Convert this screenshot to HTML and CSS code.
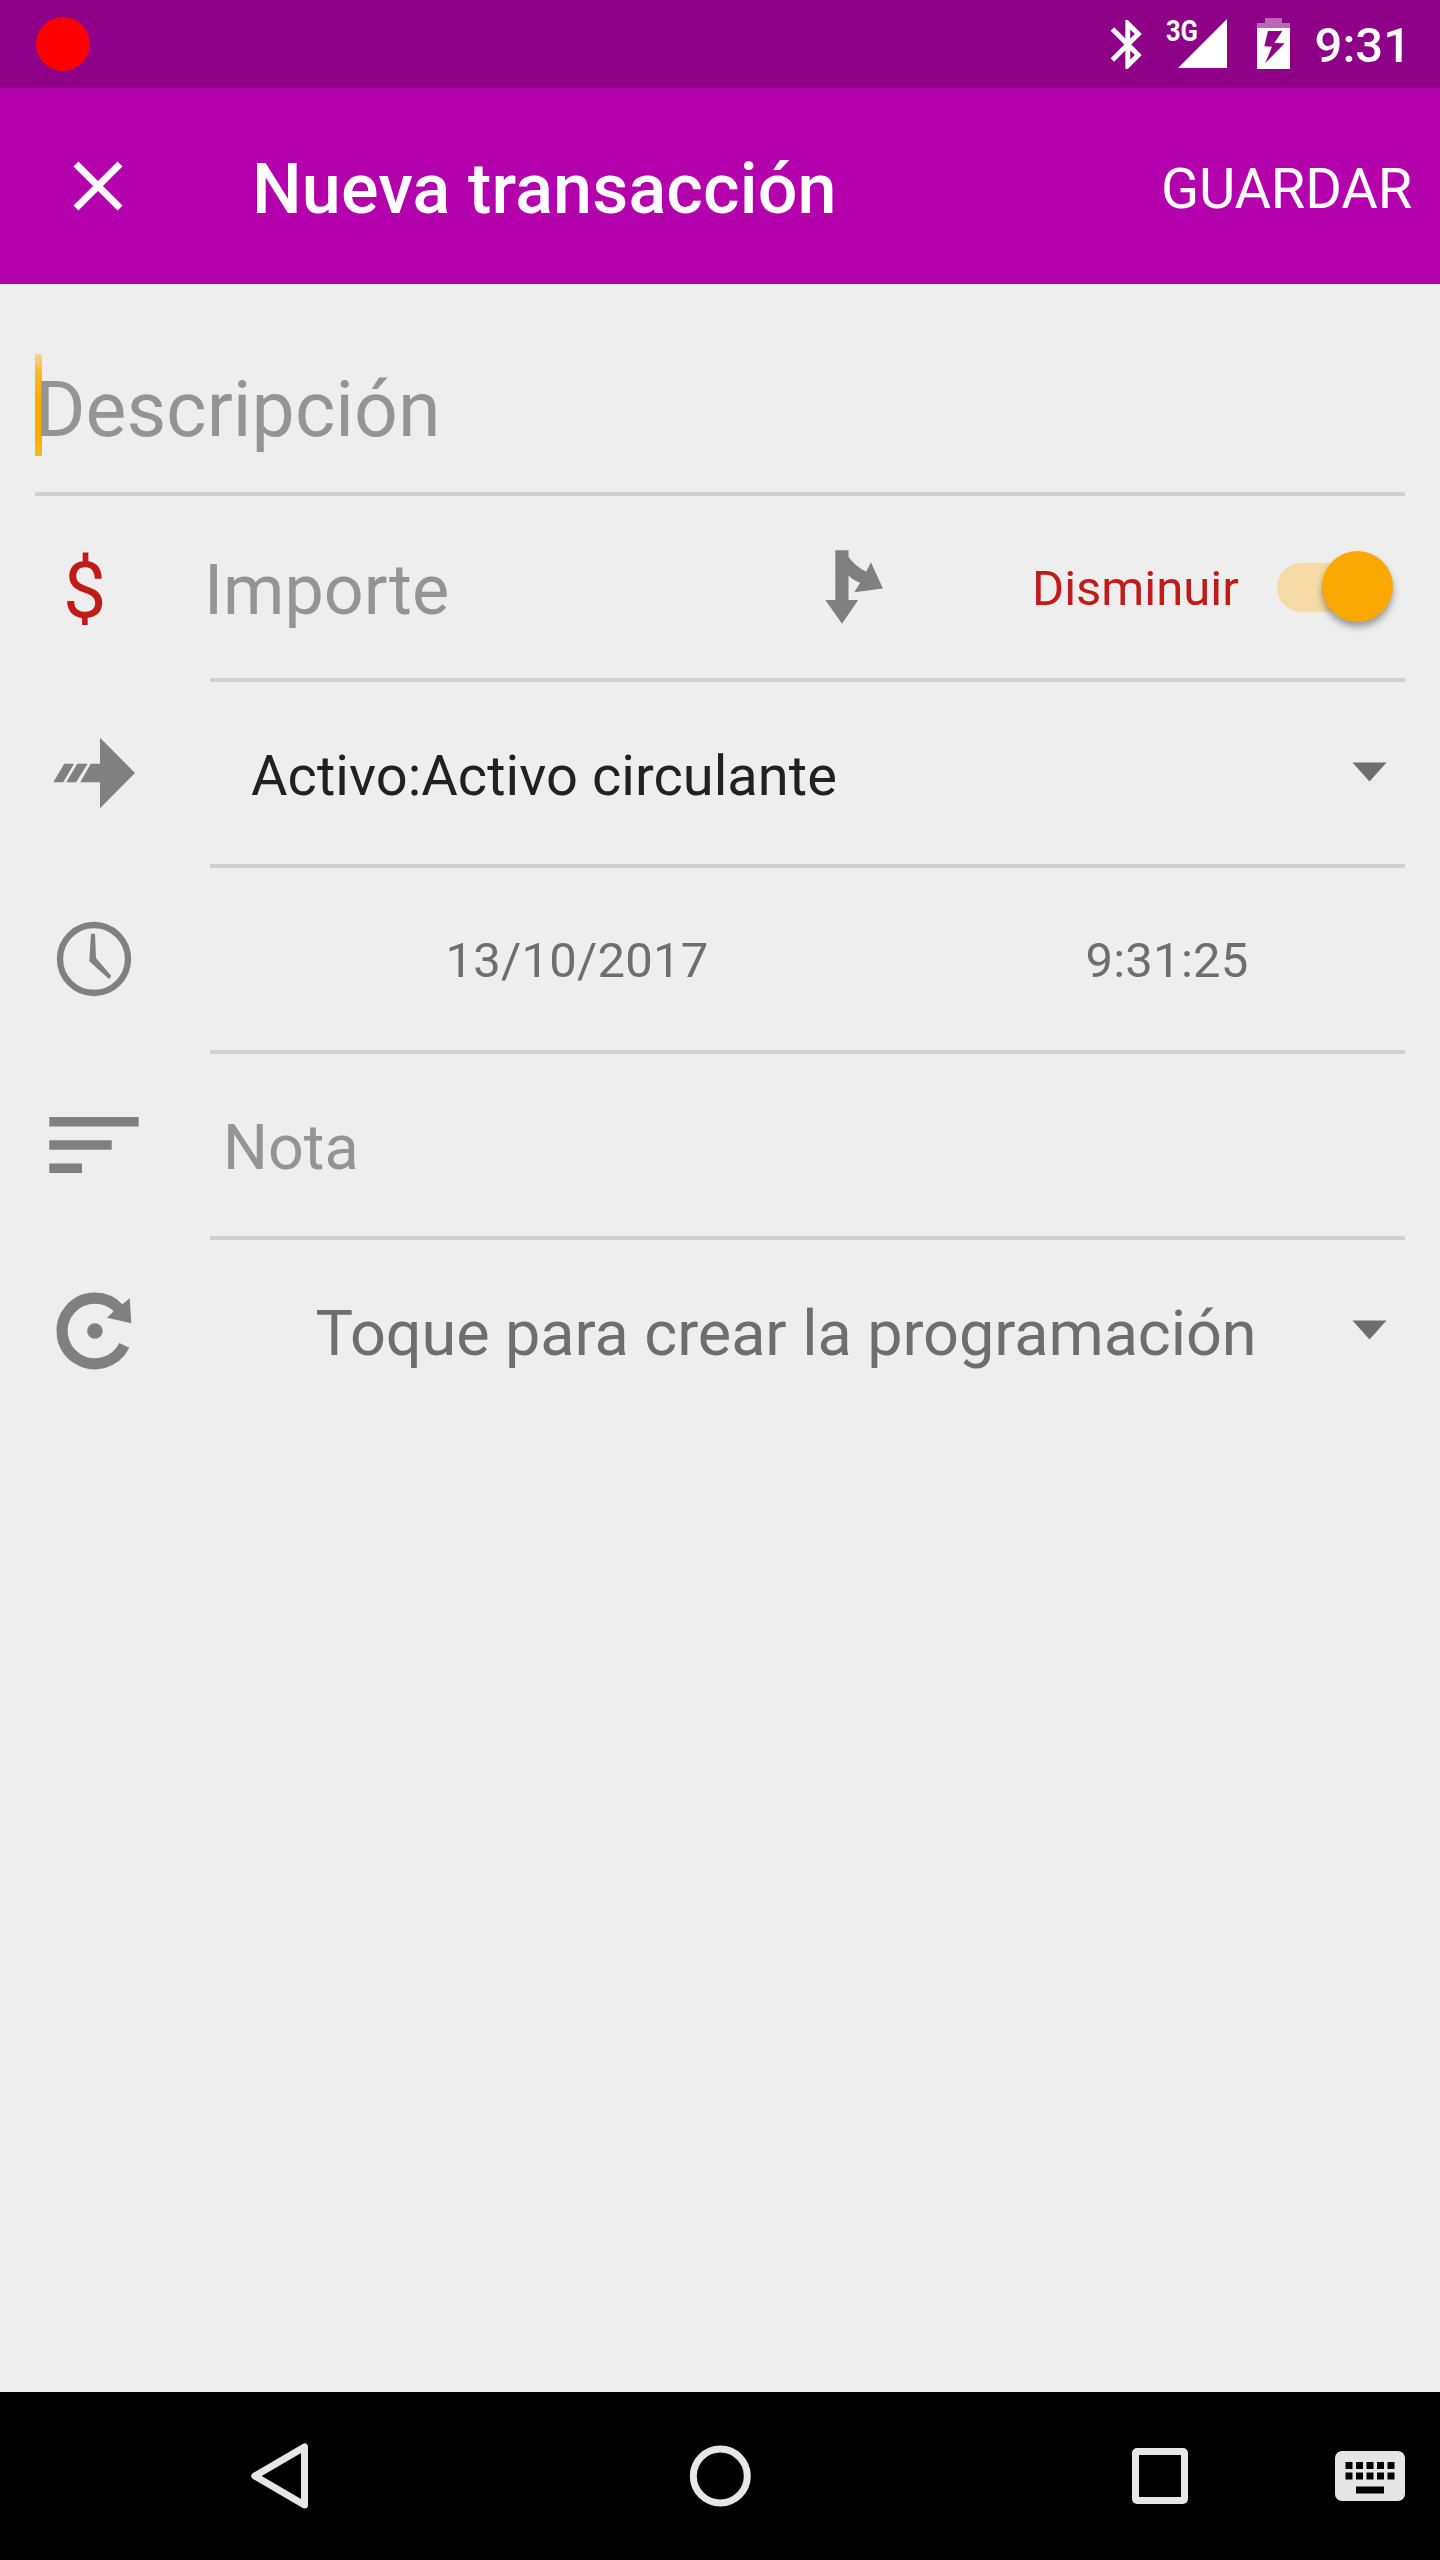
FILE: index.html
```html
<!DOCTYPE html>
<html lang="es">
<head>
<meta charset="utf-8">
<title>Nueva transacción</title>
<link rel="stylesheet" href="styles.css">
</head>
<body>
<div class="screen">
  <header class="status">
    <span class="record-dot"></span>
    <svg class="status-icons" width="190" height="88" viewBox="1105 0 190 88">
      <path fill="#fff" transform="translate(1098.4 15.1) scale(2.45)" d="M17.71 7.71L12 2h-1v7.59L6.41 5 5 6.41 10.59 12 5 17.59 6.41 19 11 14.41V22h1l5.71-5.71-4.3-4.29 4.3-4.29zM13 5.83l1.88 1.88L13 9.59V5.83zm1.88 10.46L13 18.17v-3.76l1.88 1.88z"/>
      <text class="network" x="1166" y="41.2" textLength="32" lengthAdjust="spacingAndGlyphs">3G</text>
      <path fill="#fff" d="M1227 19v49h-49z"/>
      <path fill="#fff" fill-opacity=".4" d="M1265 18h17v5h8v5h-33v-5h8z"/>
      <path fill="#fff" fill-rule="evenodd" d="M1257 28h33v41h-33zM1268 31L1264.3 46.3 1272 46.7 1265.3 63 1284.7 43.3 1274.3 43 1282.3 31z"/>
    </svg>
    <span class="clock">9:31</span>
  </header>
  <div class="appbar">
    <svg class="close" width="84" height="84" viewBox="0 0 24 24"><path fill="#fff" d="M19 6.41L17.59 5 12 10.59 6.41 5 5 6.41 10.59 12 5 17.59 6.41 19 12 13.41 17.59 19 19 17.59 13.41 12z"/></svg>
    <h1 class="title">Nueva transacción</h1>
    <span class="save">GUARDAR</span>
  </div>
  <main class="form">
    <div class="description"><span class="hint">Descripción</span></div>
    <div class="row">
      <div class="icon dollar">$</div>
      <div class="field amount">
        <span class="amount-hint">Importe</span>
        <svg class="split" width="60" height="78" viewBox="824 548 60 78" fill="#808080">
          <path d="M835.3 550.3h13.2v6.7q7 9.5 17.7 14.7l4.7-9.5 12 26.3-28.7 3.8 6-9.6q-6.5-2-11.7-7.3v24.6h9.7L842 623.7 825.3 600h10z"/>
        </svg>
        <span class="type">Disminuir</span>
        <span class="switch"><span class="thumb"></span></span>
      </div>
    </div>
    <div class="row">
      <svg class="icon" viewBox="35 682 175 182" fill="#808080">
        <path d="M100 737.7L135 773 100 808.3v-26H80.3l10.4-18.6H100zM64.3 763.7H74L63.3 782.3h-10zM77.3 763.7h10.4L76 782.3h-9.7z"/>
      </svg>
      <div class="field account">
        <span class="account-name">Activo:Activo circulante</span>
        <svg class="caret" width="35" height="20" viewBox="0 0 35 20"><path fill="#6e6e6e" d="M.5.5h34L17.5 19.5z"/></svg>
      </div>
    </div>
    <div class="row">
      <svg class="icon" viewBox="35 868 175 182" fill="#808080">
        <circle cx="94" cy="959" r="34" fill="none" stroke="#808080" stroke-width="6.3"/>
        <path d="M91 933.7h4L96 958l15.3 18-2.3 3L89.3 961.3z"/>
      </svg>
      <div class="field when"><span>13/10/2017</span><span>9:31:25</span></div>
    </div>
    <div class="row">
      <svg class="icon" viewBox="35 1054 175 182" fill="#808080">
        <path d="M49.3 1117h89.4v9.5H49.3zM49.3 1140.3h62.4v9.5H49.3zM49.3 1163.5H82v9.5H49.3z"/>
      </svg>
      <div class="field note">Nota</div>
    </div>
    <div class="row last">
      <svg class="icon" viewBox="35 1240 175 182" fill="#808080">
        <path d="M124.3 1345.4A32.8 32.8 0 1 1 119 1308.7" fill="none" stroke="#808080" stroke-width="11.2"/>
        <path d="M129.7 1298.3l1.6 25L107 1317.7l7-6.7 8.7-7z"/>
        <circle cx="94.9" cy="1331" r="7.8"/>
      </svg>
      <div class="field schedule">
        <span class="schedule-text">Toque para crear la programación</span>
        <svg class="caret" width="35" height="20" viewBox="0 0 35 20"><path fill="#6e6e6e" d="M.5.5h34L17.5 19.5z"/></svg>
      </div>
    </div>
  </main>
  <nav class="nav">
    <svg class="nav-btn" width="280" height="168" viewBox="140 2392 280 168"><path d="M304.5 2447v58l-49.7-29z" fill="none" stroke="#e6e6e6" stroke-width="7" stroke-linejoin="round"/></svg>
    <svg class="nav-btn" width="280" height="168" viewBox="580 2392 280 168"><circle cx="720.3" cy="2476" r="27" fill="none" stroke="#e6e6e6" stroke-width="7"/></svg>
    <svg class="nav-btn" width="280" height="168" viewBox="1020 2392 280 168"><rect x="1135.5" y="2451.5" width="49" height="49" rx="1.5" fill="none" stroke="#e6e6e6" stroke-width="7"/></svg>
    <svg class="nav-ime" width="140" height="168" viewBox="1300 2392 140 168">
      <rect x="1335" y="2451" width="70" height="50" rx="7" fill="#e6e6e6"/>
      <path d="M1345.5 2462h7v7h-7zm10.5 0h7v7h-7zm10.5 0h7v7h-7zm10.5 0h7v7h-7zm10.5 0h7v7h-7zM1345.5 2472.5h7v7h-7zm10.5 0h7v7h-7zm10.5 0h7v7h-7zm10.5 0h7v7h-7zm10.5 0h7v7h-7zM1356 2486.5h28v7h-28z"/>
    </svg>
  </nav>
</div>
</body>
</html>
```
FILE: styles.css
```css
* { box-sizing: border-box; }
body { margin: 0; font-family: Roboto, sans-serif; background: #eee; }
svg { display: block; flex: none; }
.screen { width: 1440px; height: 2560px; display: flex; flex-direction: column; }

.status { height: 88px; background: #8e0088; display: flex; align-items: center; padding: 0 29px 0 36px; }
.record-dot { width: 54px; height: 54px; border-radius: 50%; background: #f00; }
.status-icons { margin-left: auto; }
.network { font-size: 29px; font-weight: 700; fill: #fff; }
.clock { width: 116px; padding-top: 4px; text-align: right; font-size: 49px; font-weight: 500; line-height: 58px; color: #fff; }

.appbar { height: 196px; background: #b300ac; color: #fff; display: flex; align-items: center; padding: 0 28px 0 56px; }
.title { margin: 0 0 0 112px; padding-top: 6px; font-size: 70px; font-weight: 500; line-height: 82px; letter-spacing: .17px; }
.save { margin-left: auto; padding-top: 6px; font-size: 56px; line-height: 66px; letter-spacing: -.15px; }

.form { flex: 1; padding: 0 35px; }
.description { height: 212px; border-bottom: 4px solid #d0d0d0; padding-top: 70px; }
.hint {
  display: block; height: 102px; padding-top: 11px; font-size: 77px; line-height: 90px; color: #949494; letter-spacing: .06px;
  background: linear-gradient(#f6d495, #fdb92e 18%, #ffaa00 45%, #ffaa00 80%, #fdb72c) no-repeat 0 0 / 7px 102px;
}
.row { height: 186px; display: grid; grid-template-columns: 175px 1fr; }
.icon { width: 175px; height: 182px; }
.dollar { padding: 50px 0 0 28px; font-size: 77px; line-height: 90px; color: #c11b17; }
.field { border-bottom: 4px solid #d0d0d0; display: flex; align-items: center; }
.last .field { border-bottom-color: transparent; }
.amount-hint { width: 614px; margin-left: -6px; padding-top: 6px; font-size: 70px; line-height: 82px; color: #949494; }
.split { margin-left: 6px; }
.type { width: 205px; margin-left: 148px; padding-top: 3px; font-size: 49px; line-height: 58px; color: #c11b17; }
.switch { width: 113px; height: 49px; margin-left: 40px; border-radius: 25px; background: #f5daa5; position: relative; }
.thumb { position: absolute; left: 45px; top: -12px; width: 71px; height: 71px; border-radius: 50%; background: #faa700; box-shadow: 0 5px 7px rgba(0,0,0,.36); }
.account { padding-left: 41px; justify-content: space-between; padding-right: 18px; }
.account-name { padding-top: 6px; font-size: 56px; line-height: 66px; letter-spacing: .04px; color: #212121; }
.caret { margin-top: -2px; }
.when { display: grid; grid-template-columns: 734px 446px; text-align: center; padding-top: 4px; font-size: 49px; line-height: 58px; letter-spacing: .25px; color: #6e6e6e; }
.note { padding: 5px 0 0 13px; font-size: 63px; line-height: 74px; color: #949494; }
.schedule { padding-right: 18px; }
.schedule-text { flex: 1; padding: 5px 0 0 10px; text-align: center; font-size: 63px; line-height: 74px; letter-spacing: -.08px; color: #6e6e6e; }

.nav { height: 168px; background: #000; display: flex; padding-left: 140px; }
.nav-btn + .nav-btn { margin-left: 160px; }
```
